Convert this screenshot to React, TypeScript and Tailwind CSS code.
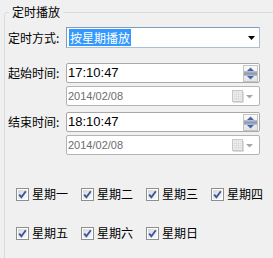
import React from "react";

const CJK = '"Noto Sans CJK SC", "Noto Sans", sans-serif';
const LAT = '"Liberation Sans", Arial, sans-serif';

function Spinner() {
  return (
    <svg width="15" height="17" viewBox="0 0 15 17" className="block">
      <defs>
        <linearGradient id="spg" x1="0" y1="0" x2="0" y2="1">
          <stop offset="0" stopColor="#fbfbfb" />
          <stop offset="1" stopColor="#e4e4e4" />
        </linearGradient>
      </defs>
      <rect x="0.5" y="0.5" width="14" height="16" fill="url(#spg)" stroke="#c4c4c4" />
      <polygon points="4,6 7.5,2.5 11,6" fill="#4a64a8" />
      <rect x="1" y="6.5" width="13" height="1" fill="#6f86bf" />
      <rect x="1" y="7.5" width="13" height="2" fill="#9a9a9a" />
      <rect x="1" y="9.5" width="13" height="1" fill="#6f86bf" />
      <polygon points="4,11 11,11 7.5,14.5" fill="#4a64a8" />
    </svg>
  );
}

function CalendarIcon() {
  return (
    <svg width="22" height="13" viewBox="0 0 22 13" className="block">
      <rect x="0.5" y="0.5" width="10" height="11" fill="#f4f4f4" stroke="#c8c8c8" />
      <rect x="2" y="2" width="7" height="8" fill="none" stroke="#dedede" strokeWidth="1" />
      <line x1="4.5" y1="2" x2="4.5" y2="10" stroke="#dedede" />
      <line x1="6.5" y1="2" x2="6.5" y2="10" stroke="#dedede" />
      <line x1="2" y1="4.5" x2="9" y2="4.5" stroke="#dedede" />
      <line x1="2" y1="6.5" x2="9" y2="6.5" stroke="#dedede" />
      <line x1="2" y1="8.5" x2="9" y2="8.5" stroke="#dedede" />
      <line x1="11.5" y1="2" x2="11.5" y2="12.5" stroke="#dcdcdc" />
      <line x1="1" y1="12.5" x2="11.5" y2="12.5" stroke="#dcdcdc" />
      <polygon points="14,5 21,5 17.5,8.5" fill="#a8a8a8" />
    </svg>
  );
}

function Check() {
  return (
    <svg width="13" height="13" viewBox="0 0 13 13" className="block shrink-0">
      <defs>
        <linearGradient id="cbg" x1="0" y1="0" x2="1" y2="1">
          <stop offset="0" stopColor="#d8d8d8" />
          <stop offset="1" stopColor="#fafafa" />
        </linearGradient>
      </defs>
      <rect x="0.5" y="0.5" width="12" height="12" fill="#ffffff" stroke="#8f8f8f" />
      <rect x="2" y="2" width="9" height="9" fill="url(#cbg)" />
      <path d="M3.2 6.6 L5.4 9.2 L9.8 3.2" fill="none" stroke="#3b55a0" strokeWidth="1.9" />
    </svg>
  );
}

function TimeRow({ label, time, date }: { label: string; time: string; date: string }) {
  return (
    <>
      <div className="flex items-center">
        <div className="w-[58px] text-[12px] leading-[16px] text-black" style={{ fontFamily: CJK }}>
          {label}
        </div>
        <div className="flex h-[20px] w-[194px] items-center justify-between rounded-[2px] border border-[#a9a9a9] bg-white pl-[1px] pr-[1px]">
          <span className="text-[13px] leading-[16px] text-black" style={{ fontFamily: LAT }}>
            {time}
          </span>
          <Spinner />
        </div>
      </div>
      <div className="mt-[3px] flex items-center">
        <div className="w-[58px]" />
        <div className="flex h-[20px] w-[194px] items-center justify-between rounded-[2px] border border-[#b4b4b4] bg-white pl-[1px] pr-[5px]">
          <span className="text-[11px] leading-[14px] text-[#6d6d6d]" style={{ fontFamily: LAT }}>
            {date}
          </span>
          <CalendarIcon />
        </div>
      </div>
    </>
  );
}

export default function App() {
  const days = ["星期一", "星期二", "星期三", "星期四", "星期五", "星期六", "星期日"];
  return (
    <div className="flex h-[258px] w-[273px] overflow-hidden bg-[#f0f0f0]" style={{ fontFamily: CJK }}>
      <fieldset className="ml-[4px] mt-[4px] h-[280px] w-[265px] shrink-0 rounded-[3px] border border-[#d5dbe0] px-[3px]">
        <legend className="ml-[1px] px-[3px] text-[12px] leading-[16px] text-black">定时播放</legend>
        <div className="mt-[7px] flex items-center">
          <div className="w-[58px] text-[12px] leading-[16px] text-black">定时方式:</div>
          <div className="flex h-[21px] w-[194px] items-center justify-between border border-[#7f9db9] border-b-[#a9bfd6] border-r-[#a9bfd6] bg-white pl-[2px] pr-[4px]">
            <span className="bg-[#3399ff] px-[1px] text-[12px] leading-[17px] text-white">按星期播放</span>
            <svg width="7" height="4" viewBox="0 0 7 4" className="block">
              <polygon points="0,0 7,0 3.5,4" fill="#000" />
            </svg>
          </div>
        </div>
        <div className="mt-[15px]">
          <TimeRow label="起始时间:" time="17:10:47" date="2014/02/08" />
        </div>
        <div className="mt-[6px]">
          <TimeRow label="结束时间:" time="18:10:47" date="2014/02/08" />
        </div>
        <div className="mt-[31px] grid grid-cols-[65px_65px_65px_65px] gap-y-[23px] pl-[8px]">
          {days.map((d) => (
            <div key={d} className="flex h-[16px] items-center gap-[3px]">
              <Check />
              <span className="text-[12px] leading-[16px] text-black">{d}</span>
            </div>
          ))}
        </div>
      </fieldset>
      <div className="ml-[1px] h-full flex-1 bg-[#f6f6f6]" />
    </div>
  );
}
